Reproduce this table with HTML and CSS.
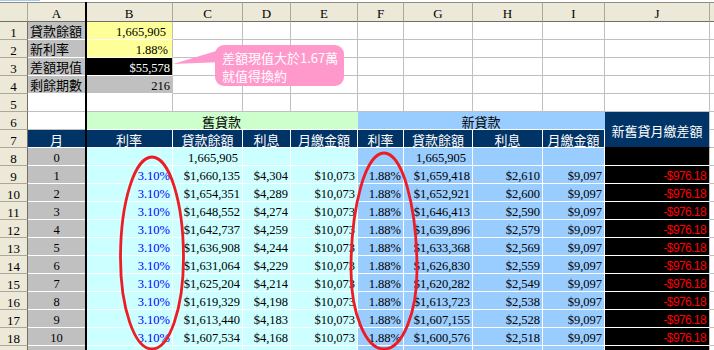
FILE: index.html
```html
<!DOCTYPE html>
<html lang="zh-Hant">
<head>
<meta charset="utf-8">
<title>換約試算</title>
<link rel="stylesheet" href="styles.css">
</head>
<body>
<div class="page">
  <div class="topbar"><span class="sel"></span></div>
  <div class="sheet">
    <!-- header -->
    <div class="hd"></div><div class="hd">A</div><div class="hd">B</div><div class="hd">C</div><div class="hd">D</div><div class="hd">E</div><div class="hd">F</div><div class="hd">G</div><div class="hd">H</div><div class="hd">I</div><div class="hd">J</div><div class="hd"></div>
    <!-- 1 -->
    <div class="rh">1</div><div class="g t">貸款餘額</div><div class="y r sp">1,665,905</div><div></div><div></div><div></div><div></div><div></div><div></div><div></div><div></div><div></div>
    <!-- 2 -->
    <div class="rh">2</div><div class="g t">新利率</div><div class="y r p4">1.88%</div><div></div><div></div><div></div><div></div><div></div><div></div><div></div><div></div><div></div>
    <!-- 3 -->
    <div class="rh">3</div><div class="g t">差額現值</div><div class="k r">$55,578</div><div></div><div></div><div></div><div></div><div></div><div></div><div></div><div></div><div></div>
    <!-- 4 -->
    <div class="rh">4</div><div class="g t">剩餘期數</div><div class="g gb r">216</div><div></div><div></div><div></div><div></div><div></div><div></div><div></div><div></div><div></div>
    <!-- 5 -->
    <div class="rh">5</div><div></div><div></div><div></div><div></div><div></div><div></div><div></div><div></div><div></div><div></div><div></div>
    <!-- 6 -->
    <div class="rh">6</div><div></div><div class="grn t c6">舊貸款</div><div class="nb t c6">新貸款</div><div class="jh t">新舊貸月繳差額</div><div></div>
    <!-- 7 -->
    <div class="rh">7</div><div class="nv t">月</div><div class="nv t">利率</div><div class="nv t">貸款餘額</div><div class="nv t">利息</div><div class="nv t">月繳金額</div><div class="nv t">利率</div><div class="nv t">貸款餘額</div><div class="nv t">利息</div><div class="nv t">月繳金額</div><div></div>
    <!-- 8 -->
    <div class="rh">8</div><div class="g ctr">0</div><div class="cy"></div><div class="cy r p4">1,665,905</div><div class="cy"></div><div class="cy"></div><div class="bl"></div><div class="bl r sp">1,665,905</div><div class="bl"></div><div class="bl"></div><div class="jk"></div><div></div>
    <!-- 9 -->
    <div class="rh">9</div><div class="g ctr">1</div><div class="cy r pc">3.10%</div><div class="cy r">$1,660,135</div><div class="cy r">$4,304</div><div class="cy r">$10,073</div><div class="bl r">1.88%</div><div class="bl r">$1,659,418</div><div class="bl r">$2,610</div><div class="bl r">$9,097</div><div class="jk r">-$976.18</div><div></div>
    <!-- 10 -->
    <div class="rh">10</div><div class="g ctr">2</div><div class="cy r pc">3.10%</div><div class="cy r">$1,654,351</div><div class="cy r">$4,289</div><div class="cy r">$10,073</div><div class="bl r">1.88%</div><div class="bl r">$1,652,921</div><div class="bl r">$2,600</div><div class="bl r">$9,097</div><div class="jk r">-$976.18</div><div></div>
    <!-- 11 -->
    <div class="rh">11</div><div class="g ctr">3</div><div class="cy r pc">3.10%</div><div class="cy r">$1,648,552</div><div class="cy r">$4,274</div><div class="cy r">$10,073</div><div class="bl r">1.88%</div><div class="bl r">$1,646,413</div><div class="bl r">$2,590</div><div class="bl r">$9,097</div><div class="jk r">-$976.18</div><div></div>
    <!-- 12 -->
    <div class="rh">12</div><div class="g ctr">4</div><div class="cy r pc">3.10%</div><div class="cy r">$1,642,737</div><div class="cy r">$4,259</div><div class="cy r">$10,073</div><div class="bl r">1.88%</div><div class="bl r">$1,639,896</div><div class="bl r">$2,579</div><div class="bl r">$9,097</div><div class="jk r">-$976.18</div><div></div>
    <!-- 13 -->
    <div class="rh">13</div><div class="g ctr">5</div><div class="cy r pc">3.10%</div><div class="cy r">$1,636,908</div><div class="cy r">$4,244</div><div class="cy r">$10,073</div><div class="bl r">1.88%</div><div class="bl r">$1,633,368</div><div class="bl r">$2,569</div><div class="bl r">$9,097</div><div class="jk r">-$976.18</div><div></div>
    <!-- 14 -->
    <div class="rh">14</div><div class="g ctr">6</div><div class="cy r pc">3.10%</div><div class="cy r">$1,631,064</div><div class="cy r">$4,229</div><div class="cy r">$10,073</div><div class="bl r">1.88%</div><div class="bl r">$1,626,830</div><div class="bl r">$2,559</div><div class="bl r">$9,097</div><div class="jk r">-$976.18</div><div></div>
    <!-- 15 -->
    <div class="rh">15</div><div class="g ctr">7</div><div class="cy r pc">3.10%</div><div class="cy r">$1,625,204</div><div class="cy r">$4,214</div><div class="cy r">$10,073</div><div class="bl r">1.88%</div><div class="bl r">$1,620,282</div><div class="bl r">$2,549</div><div class="bl r">$9,097</div><div class="jk r">-$976.18</div><div></div>
    <!-- 16 -->
    <div class="rh">16</div><div class="g ctr">8</div><div class="cy r pc">3.10%</div><div class="cy r">$1,619,329</div><div class="cy r">$4,198</div><div class="cy r">$10,073</div><div class="bl r">1.88%</div><div class="bl r">$1,613,723</div><div class="bl r">$2,538</div><div class="bl r">$9,097</div><div class="jk r">-$976.18</div><div></div>
    <!-- 17 -->
    <div class="rh">17</div><div class="g ctr">9</div><div class="cy r pc">3.10%</div><div class="cy r">$1,613,440</div><div class="cy r">$4,183</div><div class="cy r">$10,073</div><div class="bl r">1.88%</div><div class="bl r">$1,607,155</div><div class="bl r">$2,528</div><div class="bl r">$9,097</div><div class="jk r">-$976.18</div><div></div>
    <!-- 18 -->
    <div class="rh">18</div><div class="g ctr">10</div><div class="cy r pc">3.10%</div><div class="cy r">$1,607,534</div><div class="cy r">$4,168</div><div class="cy r">$10,073</div><div class="bl r">1.88%</div><div class="bl r">$1,600,576</div><div class="bl r">$2,518</div><div class="bl r">$9,097</div><div class="jk r">-$976.18</div><div></div>
    <!-- 19 (only its top edge is in view) -->
    <div class="rh"></div><div class="g"></div><div class="cy"></div><div class="cy"></div><div class="cy"></div><div class="cy"></div><div class="bl"></div><div class="bl"></div><div class="bl"></div><div class="bl"></div><div class="jk"></div><div></div>
  </div>

  <div class="freeze"></div>

  <svg class="marks" width="714" height="350" viewBox="0 0 714 350" aria-hidden="true">
    <path d="M120.5 258 A31.5 101 0 0 1 183.5 258 A31.5 91 0 0 1 120.5 258 Z" fill="none" stroke="#ee1c24" stroke-width="2.8"/>
    <path d="M351 270 A33 117 0 0 1 417 270 A33 79 0 0 1 351 270 Z" fill="none" stroke="#ee1c24" stroke-width="2.8"/>
  </svg>

  <div class="callout">差額現值大於1.67萬<br>就值得換約</div>
</div>
</body>
</html>
```

FILE: styles.css
```css
* { box-sizing: border-box; margin: 0; padding: 0; }

html, body {
  width: 714px;
  height: 350px;
  overflow: hidden;
  background: #fff;
}

body {
  font-family: "Liberation Serif", "Noto Sans CJK TC", serif;
  font-size: 12.5px;
  color: #000;
}

.page {
  position: relative;
  width: 714px;
  height: 350px;
  overflow: hidden;
}

.topbar {
  height: 2px;
  display: flex;
  background: #fff;
}
.topbar .sel {
  width: 40px;
  height: 1px;
  background: #a6caf0;
}

.sheet {
  display: grid;
  grid-template-columns: 28px 58px 87px 70px 48px 67px 46px 69px 70px 62px 105px 60px;
  grid-template-rows: 20px;
  grid-auto-rows: 18px;
  width: 770px;
}

.sheet > div {
  border-right: 1px solid #c0c0c0;
  border-bottom: 1px solid #c0c0c0;
  overflow: hidden;
  white-space: nowrap;
  padding: 3px 2px 0 2px;
  line-height: 15px;
}

/* column header */
.sheet > .hd {
  background: #ece9d8;
  border-top: 1px solid #8e8c80;
  border-bottom-color: #716f64;
  border-right-color: #aca899;
  text-align: center;
  font-size: 13px;
  padding: 2px 0 0;
  line-height: 17px;
}

/* row header */
.sheet > .rh {
  background: #ece9d8;
  border-right-color: #716f64;
  border-bottom-color: #aca899;
  text-align: center;
  font-size: 13px;
  padding: 3px 0 0;
}

/* text kinds */
.sheet > .t {
  font-family: "Noto Sans CJK TC", sans-serif;
  font-size: 13px;
  line-height: 17px;
  padding-top: 0;
}
.sheet > .r { text-align: right; }
.sheet > .ctr { text-align: center; }
.sheet > .sp { padding-right: 6px; }
.sheet > .p4 { padding-right: 4px; }

/* fills */
.sheet > .g {
  background: #c0c0c0;
  border-bottom-color: #fff;
  border-right-color: #fff;
}
.sheet > .gb { border-right-color: #c0c0c0; }

.sheet > .y {
  background: #ffff99;
  border-bottom-color: #fff;
}

.sheet > .k {
  background: #000;
  color: #fff;
  border-bottom-color: #fff;
}

.sheet > .grn {
  grid-column: span 4;
  background: #ccffcc;
  border-right-color: #ccffcc;
  border-bottom-color: #fff;
}

.sheet > .nb {
  grid-column: span 4;
  background: #99ccff;
  border-right-color: #99ccff;
  border-bottom-color: #fff;
}

.sheet > .c6 {
  text-align: center;
  padding-top: 1px;
}

.sheet > .jh {
  grid-row: span 2;
  background: #003366;
  color: #fff;
  border-bottom-color: #000;
  display: flex;
  align-items: center;
  justify-content: center;
  padding: 2px 0 0;
}

.sheet > .nv {
  background: #003366;
  color: #fff;
  text-align: center;
  border-right-color: #fff;
  border-bottom-color: #fff;
  padding-top: 1px;
}

.sheet > .cy {
  background: #ccffff;
  border-right-color: #fff;
  border-bottom-color: #fff;
}

.sheet > .bl {
  background: #99ccff;
  border-right-color: #fff;
  border-bottom-color: #fff;
}

.sheet > .pc { color: #0000ff; }

.sheet > .jk {
  background: #000;
  color: #ff0000;
  border-bottom-color: #fff;
  font-family: "Liberation Sans", sans-serif;
  font-size: 12px;
  letter-spacing: -0.6px;
  padding-right: 3px;
}

/* freeze pane split line */
.freeze {
  position: absolute;
  left: 85px;
  top: 2px;
  bottom: 0;
  width: 2px;
  background: #000;
}

/* hand-drawn ellipses */
.marks {
  position: absolute;
  left: 0;
  top: 0;
  pointer-events: none;
}

/* callout shape */
.callout {
  position: absolute;
  left: 215px;
  top: 45px;
  width: 129px;
  height: 41px;
  background: #ff99cc;
  border-radius: 9px;
  color: #fff;
  font-family: "Noto Sans CJK TC", sans-serif;
  font-size: 13px;
  line-height: 18px;
  padding: 4px 0 0 7px;
  white-space: nowrap;
}
.callout::before {
  content: "";
  position: absolute;
  left: -42px;
  top: 0;
  width: 50px;
  height: 25px;
  background: #ff99cc;
  clip-path: polygon(0 19px, 50px 4px, 50px 17px);
}
```
